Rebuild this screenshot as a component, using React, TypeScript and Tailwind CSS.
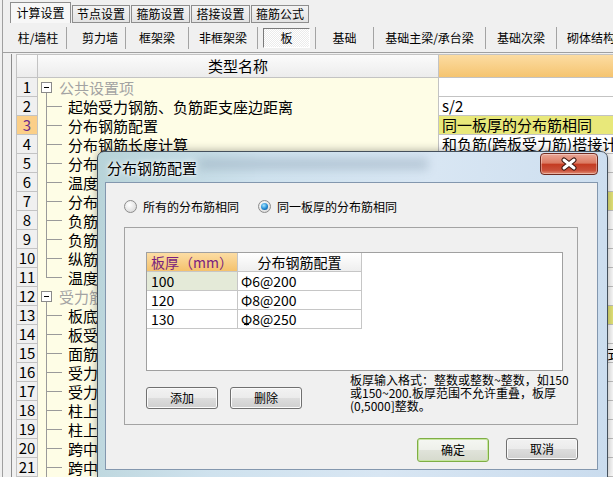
import React from "react";

type GridRow = {
  n: number;
  name: string;
  value?: string;
  cat?: boolean;
  last?: boolean;
  hl?: boolean;
  sel?: boolean;
};

const gridRows: GridRow[] = [
  { n: 1, name: "公共设置项", cat: true },
  { n: 2, name: "起始受力钢筋、负筋距支座边距离", value: "s/2" },
  { n: 3, name: "分布钢筋配置", value: "同一板厚的分布筋相同", hl: true, sel: true },
  { n: 4, name: "分布钢筋长度计算", value: "和负筋(跨板受力筋)搭接计算" },
  { n: 5, name: "分布筋与负筋(跨板受力筋)的搭接长度", value: "150" },
  { n: 6, name: "温度筋与负筋(跨板受力筋)的搭接长度", value: "ll" },
  { n: 7, name: "分布钢筋根数计算方式", value: "向下取整+1", hl: true },
  { n: 8, name: "负筋(跨板受力筋)分布筋、温度筋是否带弯勾", value: "否" },
  { n: 9, name: "负筋/跨板受力筋在板内的弯折长度", value: "板厚-2*保护层" },
  { n: 10, name: "纵筋搭接接头错开百分率", value: "50%" },
  { n: 11, name: "温度筋起步距离", value: "s", last: true },
  { n: 12, name: "受力筋", cat: true },
  { n: 13, name: "板底钢筋伸入支座的长度", value: "max(ha/2,5*d)", hl: true },
  { n: 14, name: "板受力筋/板带钢筋按平均长度计算", value: "否" },
  { n: 15, name: "面筋(单标注跨板受力筋)伸入支座的锚固长度", value: "能直锚就直锚，否则按公式计算" },
  { n: 16, name: "受力筋根数计算方式", value: "向上取整+1" },
  { n: 17, name: "受力筋遇洞口或端部无支座时的弯折长度", value: "板厚-2*保护层" },
  { n: 18, name: "柱上板带/板带暗梁下部受力筋伸入支座的长度", value: "ha-bhc+15*d" },
  { n: 19, name: "柱上板带/板带暗梁上部受力筋伸入支座的长度", value: "0.6*Lab+15*d" },
  { n: 20, name: "跨中板带下部受力筋伸入支座的长度", value: "max(ha/2,12*d)" },
  { n: 21, name: "跨中板带上部受力筋伸入支座的长度", value: "0.6*Lab+15*d" },
];

const tabs = [
  { label: "计算设置", active: true, w: "w-[61px]" },
  { label: "节点设置", w: "w-[58px]" },
  { label: "箍筋设置", w: "w-[59px]" },
  { label: "搭接设置", w: "w-[59px]" },
  { label: "箍筋公式", w: "w-[58px]" },
];

const tools = [
  { label: "柱/墙柱", cls: "w-[56px] justify-center" },
  { label: "剪力墙", cls: "w-[58px] justify-center pl-[8px]" },
  { label: "框架梁", cls: "w-[62px] justify-center" },
  { label: "非框架梁", cls: "w-[68px] justify-center" },
  { label: "板", cls: "w-[57px] justify-center", pressed: true },
  { label: "基础", cls: "w-[57px] justify-center" },
  { label: "基础主梁/承台梁", cls: "w-[111px] justify-center" },
  { label: "基础次梁", cls: "w-[70px] justify-center" },
  { label: "砌体结构", cls: "w-[80px] pl-[10px]" },
];

function Tabs() {
  return (
    <div className="h-[23px] flex items-end pl-[7px] gap-[1px] text-[12px] leading-[16px]">
      {tabs.map((t) =>
        t.active ? (
          <div
            key={t.label}
            className={`${t.w} h-[21px] border border-b-0 border-[#8e8e8e] bg-[#f7f7f7] flex items-center justify-center`}
          >
            {t.label}
          </div>
        ) : (
          <div
            key={t.label}
            className={`${t.w} h-[18px] border border-[#8e8e8e] bg-[linear-gradient(#f3f3f3,#e3e3e3)] flex items-center justify-center`}
          >
            {t.label}
          </div>
        )
      )}
    </div>
  );
}

function Toolbar() {
  return (
    <div className="h-[30px] flex items-center pl-[7px] border-b border-[#a0a0a0] text-[12px] leading-[16px] overflow-hidden">
      {tools.map((t, i) => (
        <React.Fragment key={t.label}>
          {i > 0 && <div className="w-px h-[22px] bg-[#a3a3a3] shrink-0" />}
          <div className={`${t.cls} h-full flex items-center shrink-0 whitespace-nowrap`}>
            {t.pressed ? (
              <div className="w-[47px] h-[20px] border border-t-[#7a7a7a] border-l-[#7a7a7a] border-b-white border-r-white bg-[repeating-conic-gradient(#ffffff_0%_25%,#ebebeb_0%_50%)] bg-[length:2px_2px] flex items-center justify-center">
                {t.label}
              </div>
            ) : (
              t.label
            )}
          </div>
        </React.Fragment>
      ))}
    </div>
  );
}

function TreeGutter({ row }: { row: GridRow }) {
  if (row.cat) {
    return (
      <div className="relative w-[21px] h-full shrink-0">
        <div className="absolute left-[3px] top-[4px] w-[11px] h-[11px] border border-[#8a8a8a] bg-white flex items-center justify-center">
          <div className="w-[5px] h-px bg-black" />
        </div>
        <div className="absolute left-[8px] top-[15px] bottom-0 w-px bg-[#9a9a9a]" />
      </div>
    );
  }
  return (
    <div className="relative w-[30px] h-full shrink-0">
      <div className={`absolute left-[8px] top-0 w-px bg-[#9a9a9a] ${row.last ? "h-[10px]" : "h-full"}`} />
      <div className="absolute left-[8px] top-[9px] w-[16px] h-px bg-[#9a9a9a]" />
    </div>
  );
}

function Grid() {
  return (
    <div className="ml-[8px] mt-px flex-1 border-l border-[#8c8c8c] pl-[4px] text-[15px] leading-[18px]">
      <div className="flex h-[24px] border-t border-[#c3c3c3]">
        <div className="w-[22px] shrink-0 border-l border-r border-b border-[#c3c3c3] bg-[linear-gradient(#fbfbfb,#ececec)]" />
        <div className="w-[400px] shrink-0 border-b border-[#c3c3c3] bg-[linear-gradient(#fbfbfb,#ececec)] flex items-center justify-center">
          类型名称
        </div>
        <div className="flex-1 border-l border-b border-[#c3c3c3] bg-[linear-gradient(#fcdca2,#f5c470)]" />
      </div>
      {gridRows.map((r) => (
        <div key={r.n} className="flex h-[19px]">
          <div
            className={`w-[22px] shrink-0 border-l border-r border-b border-[#c3c3c3] flex items-center justify-center ${
              r.sel ? "bg-[#fbcf88] text-[#6a2c8c]" : "bg-[#f0f0f0]"
            }`}
          >
            {r.n}
          </div>
          <div className="w-[400px] shrink-0 bg-[#fefde6] flex items-center overflow-hidden whitespace-nowrap">
            <TreeGutter row={r} />
            <span className={r.cat ? "text-[#a3a3a3]" : ""}>{r.name}</span>
          </div>
          <div
            className={`flex-1 border-l border-b border-[#c3c3c3] pl-[3px] flex items-center whitespace-nowrap overflow-hidden ${
              r.hl ? "bg-[#e8e87a]" : "bg-white"
            }`}
          >
            {r.value}
          </div>
        </div>
      ))}
    </div>
  );
}

function Radio({ checked }: { checked?: boolean }) {
  return (
    <span className="w-[13px] h-[13px] rounded-full border border-[#8c8c8c] bg-[radial-gradient(circle_at_40%_35%,#ffffff,#e2e2e2_65%,#c9c9c9)] flex items-center justify-center shrink-0">
      {checked && (
        <span className="w-[7px] h-[7px] rounded-full bg-[radial-gradient(circle_at_40%_35%,#a8e6ff,#1f8ad4_55%,#0b3d78)]" />
      )}
    </span>
  );
}

function WinButton({ label, primary }: { label: string; primary?: boolean }) {
  return (
    <div
      className={`w-[72px] ${primary ? "h-[24px]" : "h-[22px]"} rounded-[3px] border flex items-center justify-center text-[12px] leading-[16px] ${
        primary
          ? "border-[#7fae45] shadow-[inset_0_0_0_1px_#c7e6a0] bg-[linear-gradient(#f5f7f2_0%,#eef0ea_50%,#e0e3da_50%,#d6dacd_100%)]"
          : "border-[#707070] shadow-[inset_0_0_0_1px_#fbfbfb] bg-[linear-gradient(#f2f2f2_0%,#ebebeb_50%,#dddddd_50%,#cfcfcf_100%)]"
      }`}
    >
      {label}
    </div>
  );
}

const slabRows = [
  { t: "100", bar: "6@200", first: true },
  { t: "120", bar: "8@200" },
  { t: "130", bar: "8@250", hrb: true },
];

function Rebar({ hrb }: { hrb?: boolean }) {
  return (
    <span className="relative inline-block">
      Φ
      {hrb && <span className="absolute left-[3px] right-[3px] bottom-[3px] h-px bg-black" />}
    </span>
  );
}

function CloseButton() {
  return (
    <div className="ml-auto mr-[9px] mt-px w-[58px] h-[22px] rounded-[4px] border border-[#6e2a20] bg-[linear-gradient(#eaa797_0%,#db7a62_45%,#c43b22_52%,#c9503a_82%,#e39077_100%)] shadow-[inset_0_0_0_1px_rgba(255,255,255,0.35)] flex items-center justify-center">
      <svg width="18" height="14" viewBox="0 0 18 14">
        <path d="M4 3 L14 11 M14 3 L4 11" stroke="#3b1711" strokeWidth="5" strokeLinecap="round" />
        <path d="M4 3 L14 11 M14 3 L4 11" stroke="#ffffff" strokeWidth="3" strokeLinecap="round" />
      </svg>
    </div>
  );
}

function Dialog() {
  return (
    <div className="absolute left-[97px] top-[151px] w-[511px] h-[327px] rounded-t-[7px] border border-[#44505c] bg-[linear-gradient(100deg,#b7d3d8_0%,#cfe2ee_30%,#d8e6f3_60%,#cadcee_100%)] shadow-[0_0_10px_rgba(0,0,0,0.35)] flex flex-col overflow-hidden">
      <div className="relative h-[30px] flex items-start shrink-0">
        <div className="absolute left-[100px] top-[6px] w-[230px] h-[12px] bg-[#8ba0b2] opacity-40 blur-[5px]" />
        <span className="relative ml-[9px] mt-[7px] text-[15px] leading-[18px] [text-shadow:0_0_6px_#fff,0_0_3px_#fff]">
          分布钢筋配置
        </span>
        <div className="relative ml-auto flex">
          <CloseButton />
        </div>
      </div>
      <div className="ml-[7px] w-[493px] h-[288px] border border-[#8397ae] bg-[#f0f0f0] flex flex-col text-[12px] leading-[16px]">
        <div className="mt-[17px] pl-[18px] flex items-center h-[13px]">
          <Radio />
          <span className="ml-[6px] whitespace-nowrap">所有的分布筋相同</span>
          <span className="ml-[19px]">
            <Radio checked />
          </span>
          <span className="ml-[6px] whitespace-nowrap">同一板厚的分布筋相同</span>
        </div>
        <div className="mt-[14px] ml-[18px] w-[454px] h-[198px] border border-[#a3a3a3] flex flex-col">
          <div className="ml-[21px] mt-[24px] w-[417px] h-[119px] border border-[#a0a0a0] bg-white text-[14px] leading-[18px]">
            <div className="flex h-[19px]">
              <div className="w-[91px] border-r border-b border-[#c6c6c6] bg-[linear-gradient(#fcdda4,#f4c26d)] text-[#7a1f7e] flex items-center justify-center">
                板厚（mm）
              </div>
              <div className="w-[124px] border-r border-b border-[#c6c6c6] bg-[linear-gradient(#ffffff,#eeeeee)] flex items-center justify-center">
                分布钢筋配置
              </div>
            </div>
            {slabRows.map((r) => (
              <div key={r.t} className="flex h-[19px]">
                <div
                  className={`w-[91px] border-r border-b border-[#c6c6c6] pl-[4px] flex items-center ${
                    r.first ? "bg-[#e4ead8]" : ""
                  }`}
                >
                  {r.t}
                </div>
                <div className="w-[124px] border-r border-b border-[#c6c6c6] pl-[3px] flex items-center">
                  <Rebar hrb={r.hrb} />
                  {r.bar}
                </div>
              </div>
            ))}
          </div>
          <div className="flex items-start">
            <div className="ml-[21px] mt-[16px] flex gap-[12px]">
              <WinButton label="添加" />
              <WinButton label="删除" />
            </div>
            <div className="ml-[48px] mt-[2px] text-[12px] leading-[13px] whitespace-nowrap">
              板厚输入格式：整数或整数~整数，如150
              <br />
              或150~200.板厚范围不允许重叠，板厚
              <br />
              (0,5000]整数。
            </div>
          </div>
        </div>
        <div className="mt-[13px] pl-[311px] flex gap-[17px]">
          <WinButton label="确定" primary />
          <WinButton label="取消" />
        </div>
      </div>
    </div>
  );
}

export default function App() {
  return (
    <div className="relative w-[613px] h-[477px] overflow-hidden bg-[#f0f0f0] text-black font-['Noto_Sans_CJK_SC',sans-serif] select-none">
      <div className="ml-[2px] h-full border-l border-[#a0a0a0] flex flex-col">
        <Tabs />
        <Toolbar />
        <Grid />
      </div>
      <Dialog />
    </div>
  );
}
